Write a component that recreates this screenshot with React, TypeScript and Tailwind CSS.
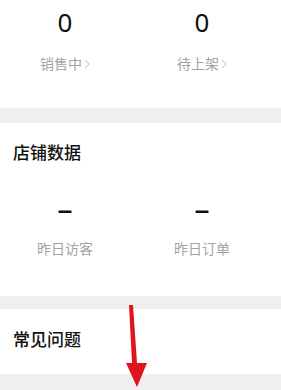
export default function App() {
  const font = { fontFamily: '"Noto Sans", "Noto Sans CJK SC", sans-serif' };
  return (
    <main className="relative w-[281px] h-[390px] overflow-hidden bg-[#efefef]" style={font}>
      {/* 商品数量 */}
      <section className="bg-white h-[108px] pt-[6px]">
        <div className="grid grid-cols-[130px_144px]">
          <Stat value="0" label="销售中" arrow />
          <Stat value="0" label="待上架" arrow />
        </div>
      </section>

      {/* 店铺数据 */}
      <section className="bg-white mt-[15px] h-[173px] pt-[18px]">
        <h2 className="pl-[13px] text-[17px] leading-[24px] font-medium text-[#111]">店铺数据</h2>
        <div className="grid grid-cols-[130px_144px] mt-[30px]">
          <Dash label="昨日访客" />
          <Dash label="昨日订单" />
        </div>
      </section>

      {/* 常见问题 */}
      <section className="bg-white mt-[13px] h-[65px] pt-[19px]">
        <h2 className="pl-[13px] text-[17px] leading-[24px] font-medium text-[#111]">常见问题</h2>
      </section>

      {/* 红色箭头标注 */}
      <svg className="absolute left-[122px] top-[303px]" width="30" height="86" viewBox="0 0 30 86">
        <polygon points="7,2 11,2 15,60 25,60 15,84 4,60 10,60" fill="#e0141b" />
      </svg>
    </main>
  );
}

function Dash({ label }: { label: string }) {
  return (
    <div className="flex flex-col items-center">
      <span className="text-[26px] leading-[30px] font-bold text-[#111]" style={{ fontFamily: '"Liberation Sans", sans-serif' }}>–</span>
      <span className="mt-[15px] text-[14px] leading-[18px] text-[#a3a3a3]">{label}</span>
    </div>
  );
}

function Stat({ value, label, arrow }: { value: string; label: string; arrow?: boolean }) {
  return (
    <div className="flex flex-col items-center">
      <span className="text-[26px] leading-[32px] text-[#111]">{value}</span>
      <span className="mt-[17px] flex items-center text-[14px] leading-[18px] text-[#a3a3a3]">
        {label}
        {arrow && (
          <svg className="ml-[2px]" width="6" height="10" viewBox="0 0 6 10">
            <path d="M1 1 L5 5 L1 9" fill="none" stroke="#bdbdbd" strokeWidth="1" />
          </svg>
        )}
      </span>
    </div>
  );
}
